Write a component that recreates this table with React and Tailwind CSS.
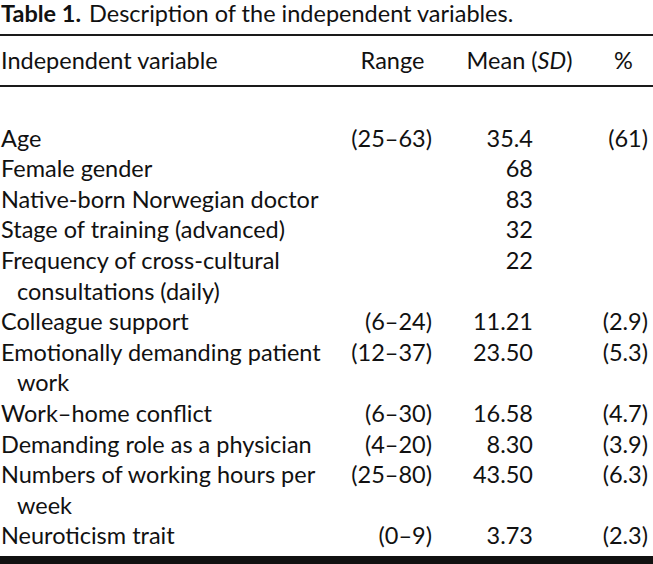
import React from 'react';

const rows = [
  { label: ['Age'], range: '(25–63)', mean: '35.4', pct: '(61)' },
  { label: ['Female gender'], mean: '68' },
  { label: ['Native-born Norwegian doctor'], mean: '83' },
  { label: ['Stage of training (advanced)'], mean: '32' },
  { label: ['Frequency of cross-cultural', 'consultations (daily)'], mean: '22' },
  { label: ['Colleague support'], range: '(6–24)', mean: '11.21', pct: '(2.9)' },
  { label: ['Emotionally demanding patient', 'work'], range: '(12–37)', mean: '23.50', pct: '(5.3)' },
  { label: ['Work–home conflict'], range: '(6–30)', mean: '16.58', pct: '(4.7)' },
  { label: ['Demanding role as a physician'], range: '(4–20)', mean: '8.30', pct: '(3.9)' },
  { label: ['Numbers of working hours per', 'week'], range: '(25–80)', mean: '43.50', pct: '(6.3)' },
  { label: ['Neuroticism trait'], range: '(0–9)', mean: '3.73', pct: '(2.3)' },
];

const App = () => {
  return (
    <div className="w-[653px] h-[564px] overflow-hidden bg-white text-[#111] font-['Lato',sans-serif] text-[23.5px]">
      {/* caption */}
      <div className="leading-[27px] pl-[1px] whitespace-nowrap">
        <span className="font-bold">Table 1.</span>
        <span className="ml-[8px]">Description of the independent variables.</span>
      </div>

      <div className="mt-[7px] border-t-2 border-[#1a1a1a]" />

      {/* header */}
      <div className="grid grid-cols-[342px_101px_153px_55px] leading-[30.6px] pt-[9px] pb-[9px]">
        <div className="pl-[1px]">Independent variable</div>
        <div className="text-center">Range</div>
        <div className="text-center">
          Mean (<span className="italic">SD</span>)
        </div>
        <div className="text-center">%</div>
      </div>

      <div className="border-t-2 border-[#1a1a1a]" />

      {/* body */}
      <div className="pt-[36px] pb-[5px] leading-[30.6px]">
        {rows.map((r, i) => (
          <div key={i} className="grid grid-cols-[340px_92px_101px_115px]">
            <div className="pl-[1px] whitespace-nowrap">
              {r.label.map((l, j) => (
                <div key={j} className={j > 0 ? 'pl-[16px]' : ''}>{l}</div>
              ))}
            </div>
            <div className="text-right">{r.range}</div>
            <div className="text-right">{r.mean}</div>
            <div className="text-right">{r.pct}</div>
          </div>
        ))}
      </div>

      <div className="h-[8px] bg-[#111]" />
    </div>
  );
};

export default App;
